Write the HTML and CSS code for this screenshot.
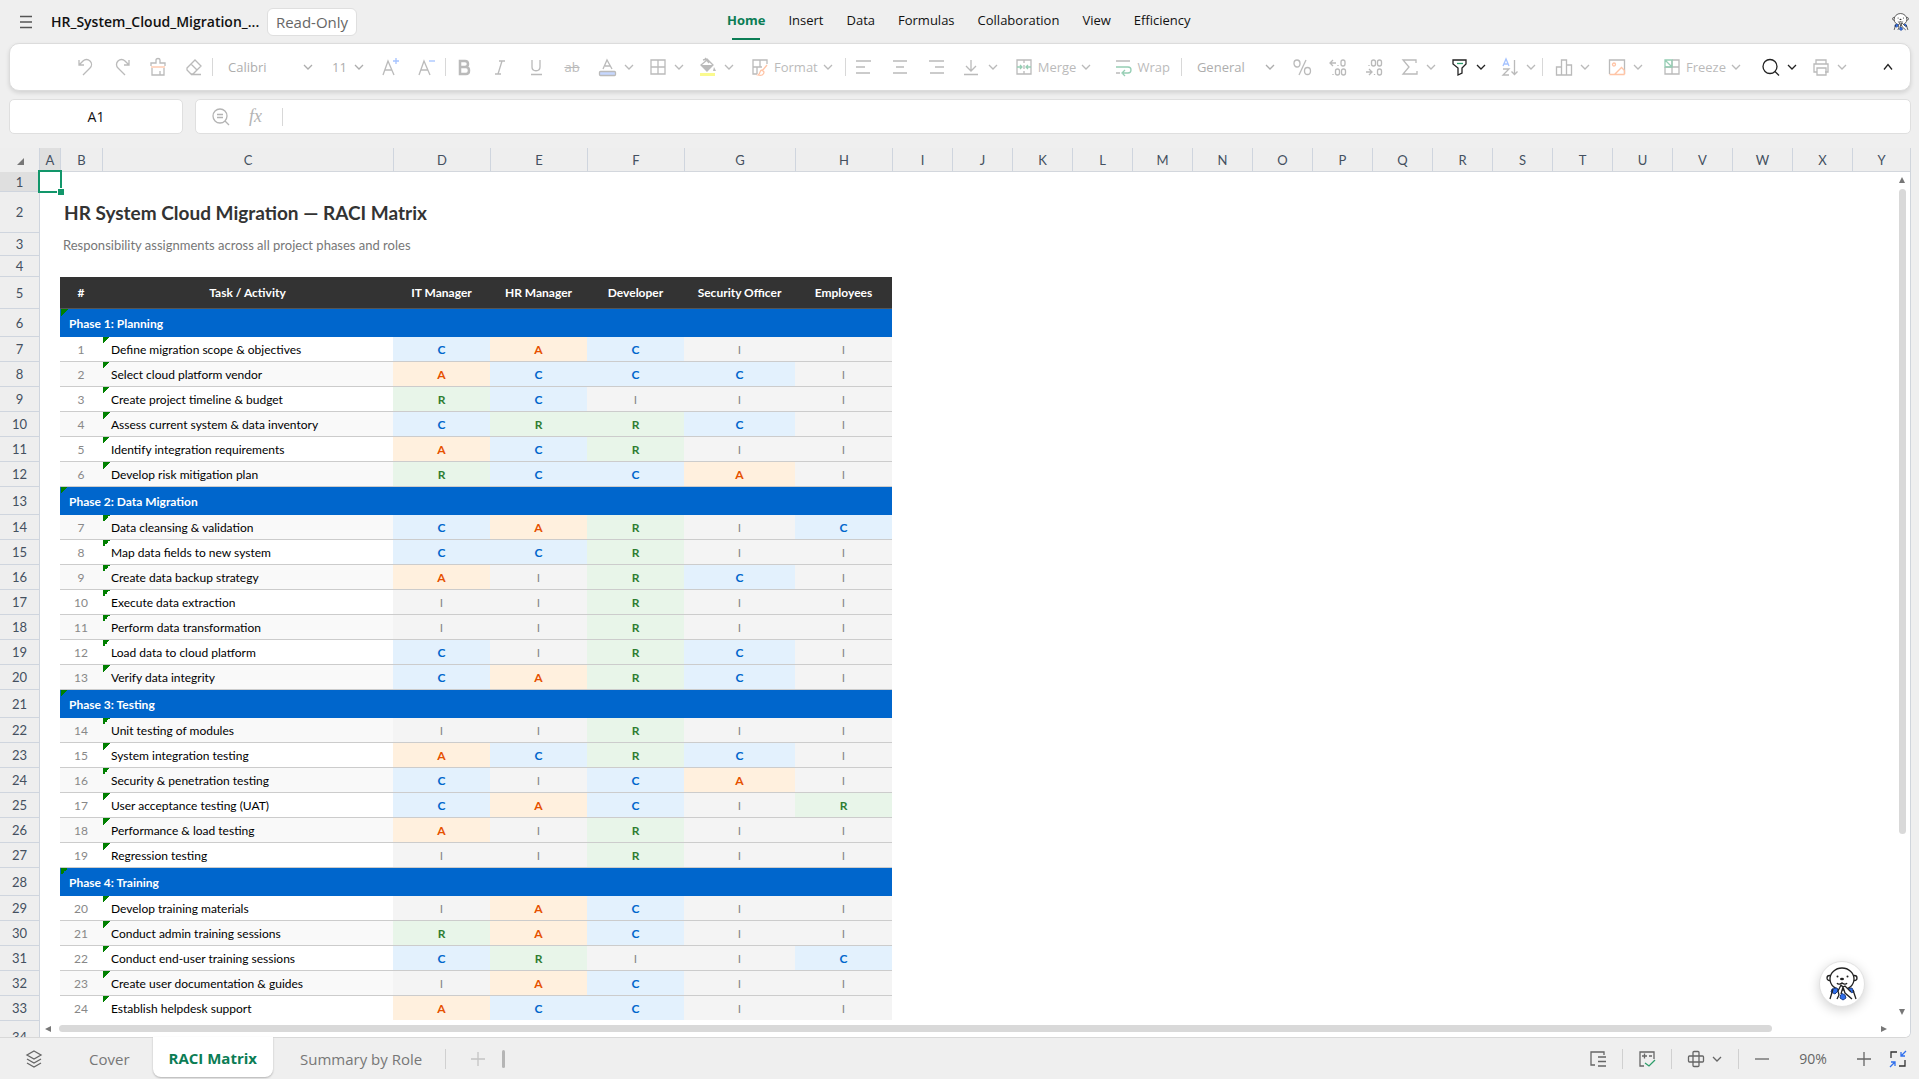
FILE: index.html
```html
<!DOCTYPE html>
<html lang="en">
<head>
  <meta charset="UTF-8">
  <title>HR_System_Cloud_Migration_RACI</title>
  <link rel="stylesheet" href="styles.css">
</head>
<body>
  <svg class="defs" aria-hidden="true">
    <symbol id="chevron" viewBox="0 0 12 12"><path d="M2 4l4 4 4-4"/></symbol>
    <symbol id="otter" viewBox="0 0 32 34">
      <circle class="fur" cx="3.5" cy="11" r="2.5"/>
      <circle class="fur" cx="28.5" cy="11" r="2.5"/>
      <ellipse class="fur" cx="16" cy="12" rx="12" ry="11"/>
      <path class="scarf" d="M6 22l5-1 1 3-3 3-4-2zM26 21l-5 1 3 4 4-1zM15 26l4 2 1 3-3 2-3-2z"/>
      <path class="fur" d="M11 32l2-4-1-4 3-6 2 2-2 7M26 32l-7-6-2-6 2-1 6 6"/>
      <path class="fur line" d="M4 32l3-10M30 32l-3-9"/>
      <circle class="ink" cx="11.5" cy="9.5" r="1"/>
      <circle class="ink" cx="21.5" cy="9.5" r="1"/>
      <ellipse class="ink" cx="16" cy="12" rx="2" ry="1.2"/>
      <path class="fur line" d="M11 16c1 2 4 1 5 0 1 1 4 2 5 0"/>
    </symbol>
  </svg>

  <header class="topbar">
    <button class="menu-btn" aria-label="Menu"><svg width="14" height="14" viewBox="0 0 14 14"><path d="M1 1.5h12M1 7h12M1 12.5h12"/></svg></button>
    <h1 class="file-name">HR_System_Cloud_Migration_...</h1>
    <span class="badge">Read-Only</span>
    <nav class="tabs">
      <a href="#" class="active">Home</a>
      <a href="#">Insert</a>
      <a href="#">Data</a>
      <a href="#">Formulas</a>
      <a href="#">Collaboration</a>
      <a href="#">View</a>
      <a href="#">Efficiency</a>
    </nav>
    <button class="avatar" aria-label="Account"><svg width="17" height="18"><use href="#otter"/></svg></button>
  </header>

  <div class="toolbar">
    <div class="group">
      <button class="tool" aria-label="Undo"><svg viewBox="0 0 20 20"><path d="M3 3v5h5M3 8l4-4c2-2 5-2 7 0s2 5 0 7l-7 7"/></svg></button>
      <button class="tool" aria-label="Redo"><svg viewBox="0 0 20 20"><path d="M17 3v5h-5M17 8l-4-4c-2-2-5-2-7 0s-2 5 0 7l7 7"/></svg></button>
      <button class="tool" aria-label="Format painter"><svg viewBox="0 0 20 20"><path d="M3 9V6h5V3c0-2 4-2 4 0v3h5v3M4 11v7h12v-7M12 18v-4"/><path class="orange" d="M3 10h14"/></svg></button>
      <button class="tool" aria-label="Clear"><svg viewBox="0 0 20 20"><path d="M3 11l8-8 6 6-8 8H7l-4-4zM7 7l6 6M7 17.5h10"/></svg></button>
    </div>
    <span class="sep"></span>
    <div class="group">
      <label class="pick font"><select aria-label="Font"><option>Calibri</option></select><svg class="chev"><use href="#chevron"/></svg></label>
      <label class="pick size"><select aria-label="Font size"><option>11</option></select><svg class="chev"><use href="#chevron"/></svg></label>
      <button class="tool" aria-label="Increase font size"><svg viewBox="0 0 20 20"><path d="M2 18L7 4l6 14M4 13h7"/><path class="blue" d="M12 4h6M15 1v6"/></svg></button>
      <button class="tool" aria-label="Decrease font size"><svg viewBox="0 0 20 20"><path d="M2 18L7 4l6 14M4 13h7"/><path class="blue" d="M12 4h6"/></svg></button>
    </div>
    <span class="sep"></span>
    <div class="group">
      <button class="tool" aria-label="Bold"><svg viewBox="0 0 20 20"><path class="thick" d="M6 4h5c4 0 4 6 0 6H6zM6 10h6c4 0 4 7 0 7H6z"/></svg></button>
      <button class="tool" aria-label="Italic"><svg viewBox="0 0 20 20"><path d="M9 4h6M5 17h6M12 4L8 17"/></svg></button>
      <button class="tool" aria-label="Underline"><svg viewBox="0 0 20 20"><path d="M6 3v7c0 5 8 5 8 0V3M5 17.5h11"/></svg></button>
      <button class="tool strike" aria-label="Strikethrough">ab</button>
      <button class="split" aria-label="Font color"><svg viewBox="0 0 20 20"><path d="M5 12l4-9 5 9M7 9h5"/><rect class="blue-fill" x="1.5" y="14.5" width="16" height="4" rx="1"/></svg><svg class="chev"><use href="#chevron"/></svg></button>
      <button class="split" aria-label="Borders"><svg viewBox="0 0 20 20"><path d="M3 3h14v14H3zM10 3v14M3 10h14"/></svg><svg class="chev"><use href="#chevron"/></svg></button>
      <button class="split" aria-label="Fill color"><svg viewBox="0 0 20 20"><path d="M5 3l4-1 6 6-6 6-6-6 6-5M7 1l4 5"/><path class="grey-fill" d="M3 8h12l-6 6zM16 10l2 4h-3z"/><path class="yellow" d="M2 17.5h15"/></svg><svg class="chev"><use href="#chevron"/></svg></button>
      <button class="labelled"><svg viewBox="0 0 20 20"><path d="M17 7V3H3v14h4M3 10h9M10 3v7M7 17v-7"/><path class="orange" d="M17 8l-5 6M12 13c-3 0-1 4-4 5 3 1 6 0 6-3z"/></svg>Format<svg class="chev"><use href="#chevron"/></svg></button>
    </div>
    <span class="sep"></span>
    <div class="group">
      <button class="tool" aria-label="Align left"><svg viewBox="0 0 20 20"><path d="M2 4h15M2 10h9M2 16h14"/></svg></button>
      <button class="tool" aria-label="Align center"><svg viewBox="0 0 20 20"><path d="M3 4h14M6 10h8M3 16h14"/></svg></button>
      <button class="tool" aria-label="Align right"><svg viewBox="0 0 20 20"><path d="M3 4h15M9 10h9M4 16h14"/></svg></button>
      <button class="split" aria-label="Vertical align"><svg viewBox="0 0 20 20"><path d="M9 3v11M4 9l5 5 5-5M2 17.5h14"/></svg><svg class="chev"><use href="#chevron"/></svg></button>
      <button class="labelled"><svg viewBox="0 0 20 20"><path d="M3 3h14v14H3zM10 3v3M10 8v4M10 14v3"/><path class="green" d="M3 10h5M6 8l2 2-2 2M17 10h-5M14 8l-2 2 2 2"/></svg>Merge<svg class="chev"><use href="#chevron"/></svg></button>
      <button class="labelled"><svg viewBox="0 0 20 20"><path d="M3 4h14M3 16h4"/><path class="green" d="M3 10h12c4 0 4 6 0 6h-5M12 13l-3 3 3 3"/></svg>Wrap</button>
    </div>
    <span class="sep"></span>
    <div class="group">
      <label class="pick number"><select aria-label="Number format"><option>General</option></select><svg class="chev"><use href="#chevron"/></svg></label>
      <button class="tool" aria-label="Percent"><svg viewBox="0 0 20 20"><path d="M14 3L7 18"/><ellipse cx="5" cy="6.5" rx="3" ry="3.5"/><ellipse cx="15.5" cy="14" rx="3" ry="3.5"/></svg></button>
      <button class="tool" aria-label="Decrease decimals"><svg viewBox="0 0 20 20"><path d="M2 6h6M5 3L2 6l3 3M10 8v1M5 17v1"/><rect x="13" y="3" width="4" height="6" rx="2"/><rect x="7.5" y="12" width="4" height="6" rx="2"/><rect x="13.5" y="12" width="4" height="6" rx="2"/></svg></button>
      <button class="tool" aria-label="Increase decimals"><svg viewBox="0 0 20 20"><path d="M2 15h6M5 12l3 3-3 3M10.5 17v1M5 8v1"/><rect x="13.5" y="12" width="4" height="6" rx="2"/><rect x="7.5" y="3" width="4" height="6" rx="2"/><rect x="13.5" y="3" width="4" height="6" rx="2"/></svg></button>
      <button class="split" aria-label="Sum"><svg viewBox="0 0 20 20"><path d="M16 6V3H3l6 7-6 7h14v-3"/></svg><svg class="chev"><use href="#chevron"/></svg></button>
      <button class="split enabled" aria-label="Filter"><svg viewBox="0 0 20 20"><path d="M3 3h13v4l-4 4v5l-4 2v-7L3 7z"/><path class="green" d="M7 6.5h6"/></svg><svg class="chev"><use href="#chevron"/></svg></button>
      <button class="split" aria-label="Sort"><svg viewBox="0 0 20 20"><path class="blue" d="M3 9l3-7 3 7M4 7h4"/><path d="M3 12h6l-6 6h6M14.5 3v15M11.5 14.5l3 3 3-3"/></svg><svg class="chev"><use href="#chevron"/></svg></button>
    </div>
    <span class="sep"></span>
    <div class="group loose">
      <button class="split" aria-label="Chart"><svg viewBox="0 0 20 20"><path d="M2.5 10h5v8h-5zM7.5 3h5v15h-5zM12.5 8h5v10h-5z"/></svg><svg class="chev"><use href="#chevron"/></svg></button>
      <button class="split" aria-label="Picture"><svg viewBox="0 0 20 20"><path d="M2.5 17V3h15v14"/><path class="orange" d="M2.5 17.5h5l7-7 3 3v4M2.5 17.5h15"/><circle class="orange" cx="7" cy="7.5" r="1.5"/></svg><svg class="chev"><use href="#chevron"/></svg></button>
      <button class="labelled"><svg viewBox="0 0 20 20"><path d="M10 3v14M3 10h14M10 17H3v-7M10 17h7V3h-7"/><path class="green" d="M3 3h7v7H3zM3 3l7 7"/></svg>Freeze<svg class="chev"><use href="#chevron"/></svg></button>
    </div>
    <div class="group">
      <button class="split enabled" aria-label="Find"><svg viewBox="0 0 20 20"><circle cx="9" cy="9.5" r="7"/><path d="M14 14.5l4 4"/></svg><svg class="chev"><use href="#chevron"/></svg></button>
      <button class="split" aria-label="Print"><svg viewBox="0 0 20 20"><path d="M5 7V3h10v4M6 15H3V7h14v8h-3M6 11h9v7H6z"/></svg><svg class="chev"><use href="#chevron"/></svg></button>
    </div>
    <button class="tool enabled collapse" aria-label="Collapse toolbar"><svg viewBox="0 0 20 20"><path d="M6 12.5l4-5 4 5"/></svg></button>
  </div>

  <div class="formula-row">
    <input class="name-box" type="text" value="A1" aria-label="Cell name">
    <div class="formula-bar">
      <svg width="20" height="20" viewBox="0 0 20 20"><circle cx="9" cy="9" r="7"/><path d="M14 14l4 4M6 7.5h6M6 10.5h6"/></svg>
      <span class="fx">fx</span>
      <input type="text" aria-label="Formula">
    </div>
  </div>

  <main class="sheet">
    <table class="grid">
      <colgroup id="cols"></colgroup>
      <thead><tr id="letters"></tr></thead>
      <tbody id="rows"></tbody>
    </table>
    <div class="scroll-y"><span class="arrow up"></span><span class="thumb"></span><span class="arrow down"></span></div>
    <div class="scroll-x"><span class="arrow left"></span><span class="thumb"></span><span class="arrow right"></span></div>
    <button class="helper" aria-label="Assistant"><svg width="32" height="34"><use href="#otter"/></svg></button>
  </main>

  <footer class="bottombar">
    <button class="icon-btn layers" aria-label="All sheets"><svg width="18" height="18" viewBox="0 0 18 18"><path d="M9 1l7 4-7 4-7-4zM2 9l7 4 7-4M2 13l7 4 7-4"/></svg></button>
    <button class="sheet-tab">Cover</button>
    <button class="sheet-tab current">RACI Matrix</button>
    <button class="sheet-tab">Summary by Role</button>
    <span class="divider"></span>
    <button class="icon-btn add" aria-label="Add sheet"><svg width="16" height="16" viewBox="0 0 16 16"><path d="M1 8h14M8 1v14"/></svg></button>
    <span class="handle"></span>
    <div class="status">
      <button class="icon-btn" aria-label="Outline"><svg width="18" height="18" viewBox="0 0 18 18"><path d="M15 5V2H2v13h4M9 7h8M9 11.5h8M9 16h8"/></svg></button>
      <span class="divider"></span>
      <button class="icon-btn" aria-label="Calculate"><svg width="18" height="18" viewBox="0 0 18 18"><path d="M16 9V2H2v14h4M4 6h5M6.5 3.5v5M11 6h3"/><path class="green" d="M7 13l4 3 6-6"/></svg></button>
      <span class="divider"></span>
      <button class="icon-btn reading" aria-label="Reading layout"><svg width="18" height="18" viewBox="0 0 18 18"><rect x="6" y="1.5" width="6" height="15" rx="1"/><rect x="1.5" y="6" width="15" height="6" rx="1"/></svg><svg class="chev"><use href="#chevron"/></svg></button>
      <span class="divider"></span>
      <button class="icon-btn" aria-label="Zoom out"><svg width="16" height="16" viewBox="0 0 16 16"><path d="M1 8h14"/></svg></button>
      <span class="percent">90%</span>
      <button class="icon-btn" aria-label="Zoom in"><svg width="16" height="16" viewBox="0 0 16 16"><path d="M1 8h14M8 1v14"/></svg></button>
      <button class="icon-btn fit" aria-label="Full screen"><svg width="18" height="18" viewBox="0 0 18 18"><path d="M2 8V2h6M16 10v6h-6"/><path class="strong-blue" d="M17 1l-5 5M12 2v4h4M1 17l5-5M2 12h4v4"/></svg></button>
    </div>
  </footer>

  <script src="script.js"></script>
</body>
</html>
```
FILE: styles.css
```css
* {
  box-sizing: border-box;
}
body {
  margin: 0;
  height: 100vh;
  display: flex;
  flex-direction: column;
  overflow: hidden;
  background-color: #efefef;
  color: #111;
  font-family: "Open Sans", "Noto Sans", sans-serif;
  font-size: 14px;
}
button, input, select {
  font: inherit;
  color: inherit;
  border: none;
  background: none;
  padding: 0;
  margin: 0;
  outline: none;
}
svg {
  fill: none;
  stroke: currentColor;
  stroke-width: 1.3;
  flex: none;
}
.defs {
  position: absolute;
  width: 0;
  height: 0;
}
.fur {
  fill: #fff;
  stroke: #222;
}
.line {
  fill: none;
}
.ink {
  fill: #222;
  stroke: none;
}
.scarf {
  fill: #2f6fed;
  stroke: #1d3f8a;
  stroke-width: 1;
}
.chev {
  width: 12px;
  height: 12px;
}
.blue { stroke: #4d88ff; }
.blue-fill { fill: #8fb0ff; }
.orange { stroke: #ff8a4d; }
.green { stroke: #2e9e6b; }
.yellow { stroke: #f7f720; stroke-width: 3; }
.grey-fill { fill: currentColor; stroke: none; }
.thick { stroke-width: 2.5; }
.strong-blue { stroke: #2f6fed; }

/* top bar */
.topbar {
  height: 43px;
  display: flex;
  align-items: center;
  padding: 0 10px 0 19px;
}
.menu-btn {
  width: 16px;
  height: 16px;
  display: flex;
  align-items: center;
  color: #555;
}
.file-name {
  margin: 0 12px 0 16px;
  width: 204px;
  font-size: 14px;
  font-weight: 600;
  white-space: nowrap;
}
.badge {
  height: 28px;
  width: 90px;
  line-height: 26px;
  text-align: center;
  border: 1px solid #dfdfdf;
  border-radius: 6px;
  background-color: #fff;
  color: #666;
  font-size: 15px;
}
.tabs {
  margin-left: 370px;
  display: flex;
  gap: 23px;
  font-size: 13px;
  height: 37px;
}
.tabs a {
  color: #111;
  text-decoration: none;
  line-height: 35px;
}
.tabs .active {
  color: #0b7d55;
  font-weight: 700;
  position: relative;
}
.tabs .active::after {
  content: "";
  position: absolute;
  left: 5px;
  right: 5px;
  bottom: 0;
  height: 2px;
  background-color: #0b7d55;
}
.avatar {
  margin-left: auto;
  display: flex;
}

/* toolbar */
.toolbar {
  height: 48px;
  margin: 0 8px 0 9px;
  padding: 0 4px 0 58px;
  display: flex;
  align-items: center;
  background-color: #fff;
  border: 1px solid #dcdcdc;
  border-radius: 10px;
  box-shadow: 0 2px 4px rgba(0, 0, 0, 0.12);
  color: #777;
  font-size: 13px;
  white-space: nowrap;
}
.group {
  display: flex;
  align-items: center;
}
.loose {
  gap: 3px;
  margin-left: 3px;
}
.sep {
  width: 1px;
  height: 18px;
  background-color: #d8d8d8;
}
.tool, .split, .labelled {
  height: 32px;
  display: flex;
  align-items: center;
  opacity: 0.5;
}
.tool svg, .split svg, .labelled svg {
  width: 20px;
  height: 20px;
}
.tool .chev, .split .chev, .labelled .chev {
  width: 12px;
  height: 12px;
}
.tool {
  width: 36px;
  justify-content: center;
}
.split {
  width: 50px;
  gap: 5px;
  padding-left: 8px;
}
.labelled {
  gap: 4px;
  padding: 0 11px 0 10px;
}
.toolbar .enabled {
  opacity: 1;
  color: #222;
}
.strike {
  text-decoration: line-through;
}
.pick {
  display: flex;
  align-items: center;
  padding: 0 3px 0 15px;
  opacity: 0.6;
}
.pick select {
  flex: 1;
  min-width: 0;
  appearance: none;
}
.font { width: 104px; }
.size { width: 56px; padding-right: 8px; }
.number { width: 102px; padding-right: 8px; }
.collapse {
  margin-left: auto;
}

/* formula row */
.formula-row {
  display: flex;
  gap: 12px;
  margin: 8px 8px 14px 9px;
}
.name-box, .formula-bar {
  height: 35px;
  background-color: #fff;
  border: 1px solid #dfdfdf;
  border-radius: 5px;
}
.name-box {
  width: 174px;
  text-align: center;
}
.formula-bar {
  flex: 1;
  display: flex;
  align-items: center;
  padding-left: 15px;
  color: #b4b4b4;
}
.fx {
  margin: 0 20px 0 18px;
  font-family: "Liberation Serif", serif;
  font-style: italic;
  font-size: 18px;
}
.formula-bar input {
  flex: 1;
  height: 18px;
  border-left: 1px solid #d8d8d8;
}

/* sheet */
.sheet {
  flex: 1;
  min-height: 0;
  position: relative;
  overflow: hidden;
  margin-right: 8px;
  border-right: 1px solid #d0d5dc;
  border-bottom: 1px solid #d8d8d8;
  border-radius: 0 0 6px 0;
  background-color: #fff;
}
.grid {
  width: 100%;
  table-layout: fixed;
  border-collapse: separate;
  border-spacing: 0;
  font-family: Lato, sans-serif;
  font-size: 12px;
}
.grid th, .grid td {
  padding: 0;
  overflow: hidden;
  white-space: nowrap;
}
.grid thead th {
  height: 24px;
  background-color: #eee;
  border-left: 1px solid #cfd5de;
  border-bottom: 1px solid #d3d7dd;
}
.grid thead th, .grid .num {
  font-size: 13px;
  font-weight: 400;
  color: #44505f;
}
.grid thead .corner {
  border-color: #eee;
}
.corner::after {
  content: "";
  display: inline-block;
  border-left: 7px solid transparent;
  border-bottom: 7px solid #777;
}
.grid .num {
  background-color: #eee;
  border-bottom: 1px solid #cfd5de;
}
.num + td {
  border-left: 1px solid #cfd5de;
}
.grid thead .picked, .grid .picked {
  background-color: #dfdfdf;
}
.h20 { height: 20px; }
.h21 { height: 21px; }
.h23 { height: 23px; }
.h25 { height: 25px; }
.h28 { height: 28px; }
.h32 { height: 32px; }
.h41 { height: 41px; }
.grid .title, .grid .subtitle {
  overflow: visible;
  padding-left: 4px;
}
.title {
  font-size: 19px;
  font-weight: 700;
  color: #333;
}
.grid .subtitle {
  padding-left: 3px;
  font-size: 13px;
  color: #777;
}
.head th:not(.num) {
  background-color: #333;
  color: #fff;
  font-weight: 700;
  border-bottom: 1px solid #555;
}
.grid .phase {
  background-color: #0066cc;
  color: #fff;
  font-weight: 700;
  text-align: left;
  padding-left: 9px;
}
.phase, .task {
  background-image: linear-gradient(135deg, #008000 50%, transparent 50%);
  background-size: 7px 7px;
  background-position: 1px 0;
  background-repeat: no-repeat;
}
.task-row td {
  border-bottom: 1px solid #ccc;
  text-align: center;
}
.task-row:nth-child(even) .id, .task-row:nth-child(even) .task {
  background-color: #f9f9f9;
}
.task-row .id {
  color: #888;
}
.grid .task-row .task {
  text-align: left;
  padding-left: 9px;
  color: #000;
}
.task-row .blank, .task-row .rest {
  border-bottom: none;
}
.role {
  font-weight: 700;
}
.role-R { background-color: #e8f5e9; color: #2e7d32; }
.role-A { background-color: #fff0de; color: #e65100; }
.role-C { background-color: #e3f1fd; color: #0066cc; }
.role-I { background-color: #f4f4f4; color: #888; font-weight: 400; }
.grid .selected {
  position: relative;
  overflow: visible;
}
.selected::before {
  content: "";
  position: absolute;
  inset: -2px -2px -1px -2px;
  border: 2px solid #12966a;
}
.selected::after {
  content: "";
  position: absolute;
  right: -4px;
  bottom: -3px;
  width: 6px;
  height: 6px;
  background-color: #12966a;
  border: 1px solid #fff;
  border-width: 1px 0 0 1px;
}

/* scrollbars lie over the grid */
.scroll-y, .scroll-x {
  position: absolute;
  display: flex;
  align-items: center;
  background-color: #fff;
}
.scroll-y {
  top: 24px;
  right: 0;
  bottom: 16px;
  width: 16px;
  flex-direction: column;
  padding: 5px 0 6px;
}
.scroll-x {
  left: 40px;
  right: 0;
  bottom: 0;
  height: 17px;
  padding: 0 23px 0 5px;
}
.thumb {
  background-color: #d9d9d9;
  border-radius: 4px;
}
.scroll-y .thumb {
  width: 7px;
  height: 77%;
  margin: 6px 0 auto;
}
.scroll-x .thumb {
  height: 7px;
  width: 93%;
  margin: 0 auto 0 8px;
}
.arrow {
  border: 3px solid transparent;
}
.up { border-bottom: 6px solid #777; border-top: none; }
.down { border-top: 6px solid #777; border-bottom: none; }
.left { border-right: 6px solid #777; border-left: none; }
.right { border-left: 6px solid #777; border-right: none; }
.helper {
  position: absolute;
  right: 45px;
  bottom: 30px;
  width: 46px;
  height: 46px;
  border-radius: 50%;
  background-color: #fff;
  border: 1px solid #e2e2e2;
  box-shadow: 0 3px 12px rgba(0, 0, 0, 0.18);
  display: flex;
  align-items: center;
  justify-content: center;
}

/* bottom bar */
.bottombar {
  height: 41px;
  display: flex;
  align-items: center;
  padding-right: 12px;
  color: #666;
}
.icon-btn {
  display: flex;
  align-items: center;
}
.layers {
  margin: 0 22px 0 25px;
}
.sheet-tab {
  height: 42px;
  align-self: flex-start;
  padding: 0 23px 0 24px;
  font-size: 15px;
  color: #777;
  white-space: nowrap;
}
.sheet-tab.current {
  height: 40px;
  margin: -1px 3px 0 0;
  padding: 1px 16px 0;
  position: relative;
  background-color: #fff;
  color: #0b7d55;
  font-weight: 700;
  border-radius: 0 0 8px 8px;
  box-shadow: 0 1px 2px rgba(0, 0, 0, 0.25);
}
.divider {
  width: 1px;
  height: 20px;
  background-color: #d0d0d0;
}
.add {
  margin: 0 16px 0 24px;
  color: #c4c4c4;
}
.handle {
  width: 3px;
  height: 18px;
  border-radius: 2px;
  background-color: #b5b5b5;
}
.status {
  margin-left: auto;
  display: flex;
  align-items: center;
  gap: 15px;
}
.reading {
  gap: 6px;
}
.percent {
  width: 56px;
  text-align: center;
}
.fit {
  margin-left: 2px;
  color: #333;
}
```
FILE: script.js
```js
const widths = [39, 21, 42, 291, 97, 97, 97, 111, 97];
const letters = 'ABCDEFGHIJKLMNOPQRSTUVWXY'.split('');
const roles = ['IT Manager', 'HR Manager', 'Developer', 'Security Officer', 'Employees'];

const phases = [
  ['Phase 1: Planning', [
    ['Define migration scope & objectives', 'CACII'],
    ['Select cloud platform vendor', 'ACCCI'],
    ['Create project timeline & budget', 'RCIII'],
    ['Assess current system & data inventory', 'CRRCI'],
    ['Identify integration requirements', 'ACRII'],
    ['Develop risk mitigation plan', 'RCCAI']
  ]],
  ['Phase 2: Data Migration', [
    ['Data cleansing & validation', 'CARIC'],
    ['Map data fields to new system', 'CCRII'],
    ['Create data backup strategy', 'AIRCI'],
    ['Execute data extraction', 'IIRII'],
    ['Perform data transformation', 'IIRII'],
    ['Load data to cloud platform', 'CIRCI'],
    ['Verify data integrity', 'CARCI']
  ]],
  ['Phase 3: Testing', [
    ['Unit testing of modules', 'IIRII'],
    ['System integration testing', 'ACRCI'],
    ['Security & penetration testing', 'CICAI'],
    ['User acceptance testing (UAT)', 'CACIR'],
    ['Performance & load testing', 'AIRII'],
    ['Regression testing', 'IIRII']
  ]],
  ['Phase 4: Training', [
    ['Develop training materials', 'IACII'],
    ['Conduct admin training sessions', 'RACII'],
    ['Conduct end-user training sessions', 'CRIIC'],
    ['Create user documentation & guides', 'IACII'],
    ['Establish helpdesk support', 'ACCII']
  ]]
];

// column sizes: the last one takes what is left
document.getElementById('cols').innerHTML =
  widths.concat(Array(16).fill(60)).map(w => `<col style="width:${w}px">`).join('') + '<col>';

document.getElementById('letters').innerHTML = '<th class="corner"></th>' +
  letters.map(l => `<th${l === 'A' ? ' class="picked"' : ''}>${l}</th>`).join('');

let html = '';
let row = 1;

function addRow(height, cells, cls = '', numCls = '') {
  html += `<tr class="${height} ${cls}"><th class="num ${numCls}">${row++}</th>${cells}</tr>`;
}

const blank = '<td class="blank"></td>';
const rest = '<td class="rest" colspan="17"></td>';

addRow('h20', '<td class="selected"></td><td colspan="24"></td>', '', 'picked');
addRow('h41', blank + '<td class="title" colspan="24">HR System Cloud Migration — RACI Matrix</td>');
addRow('h23', blank + '<td class="subtitle" colspan="24">Responsibility assignments across all project phases and roles</td>');
addRow('h21', '<td colspan="25"></td>');
addRow('h32', blank + ['#', 'Task / Activity', ...roles].map(r => `<th>${r}</th>`).join('') + rest, 'head');

let id = 1;
phases.forEach(([name, tasks]) => {
  addRow('h28', `${blank}<th class="phase" colspan="7">${name}</th>${rest}`);
  tasks.forEach(([task, marks]) => {
    const cells = marks.split('').map(m => `<td class="role role-${m}">${m}</td>`).join('');
    addRow('h25', `${blank}<td class="id">${id++}</td><td class="task">${task.replace('&', '&amp;')}</td>${cells}${rest}`, 'task-row');
  });
});
addRow('h32', '<td colspan="25"></td>');

document.getElementById('rows').innerHTML = html;
```
